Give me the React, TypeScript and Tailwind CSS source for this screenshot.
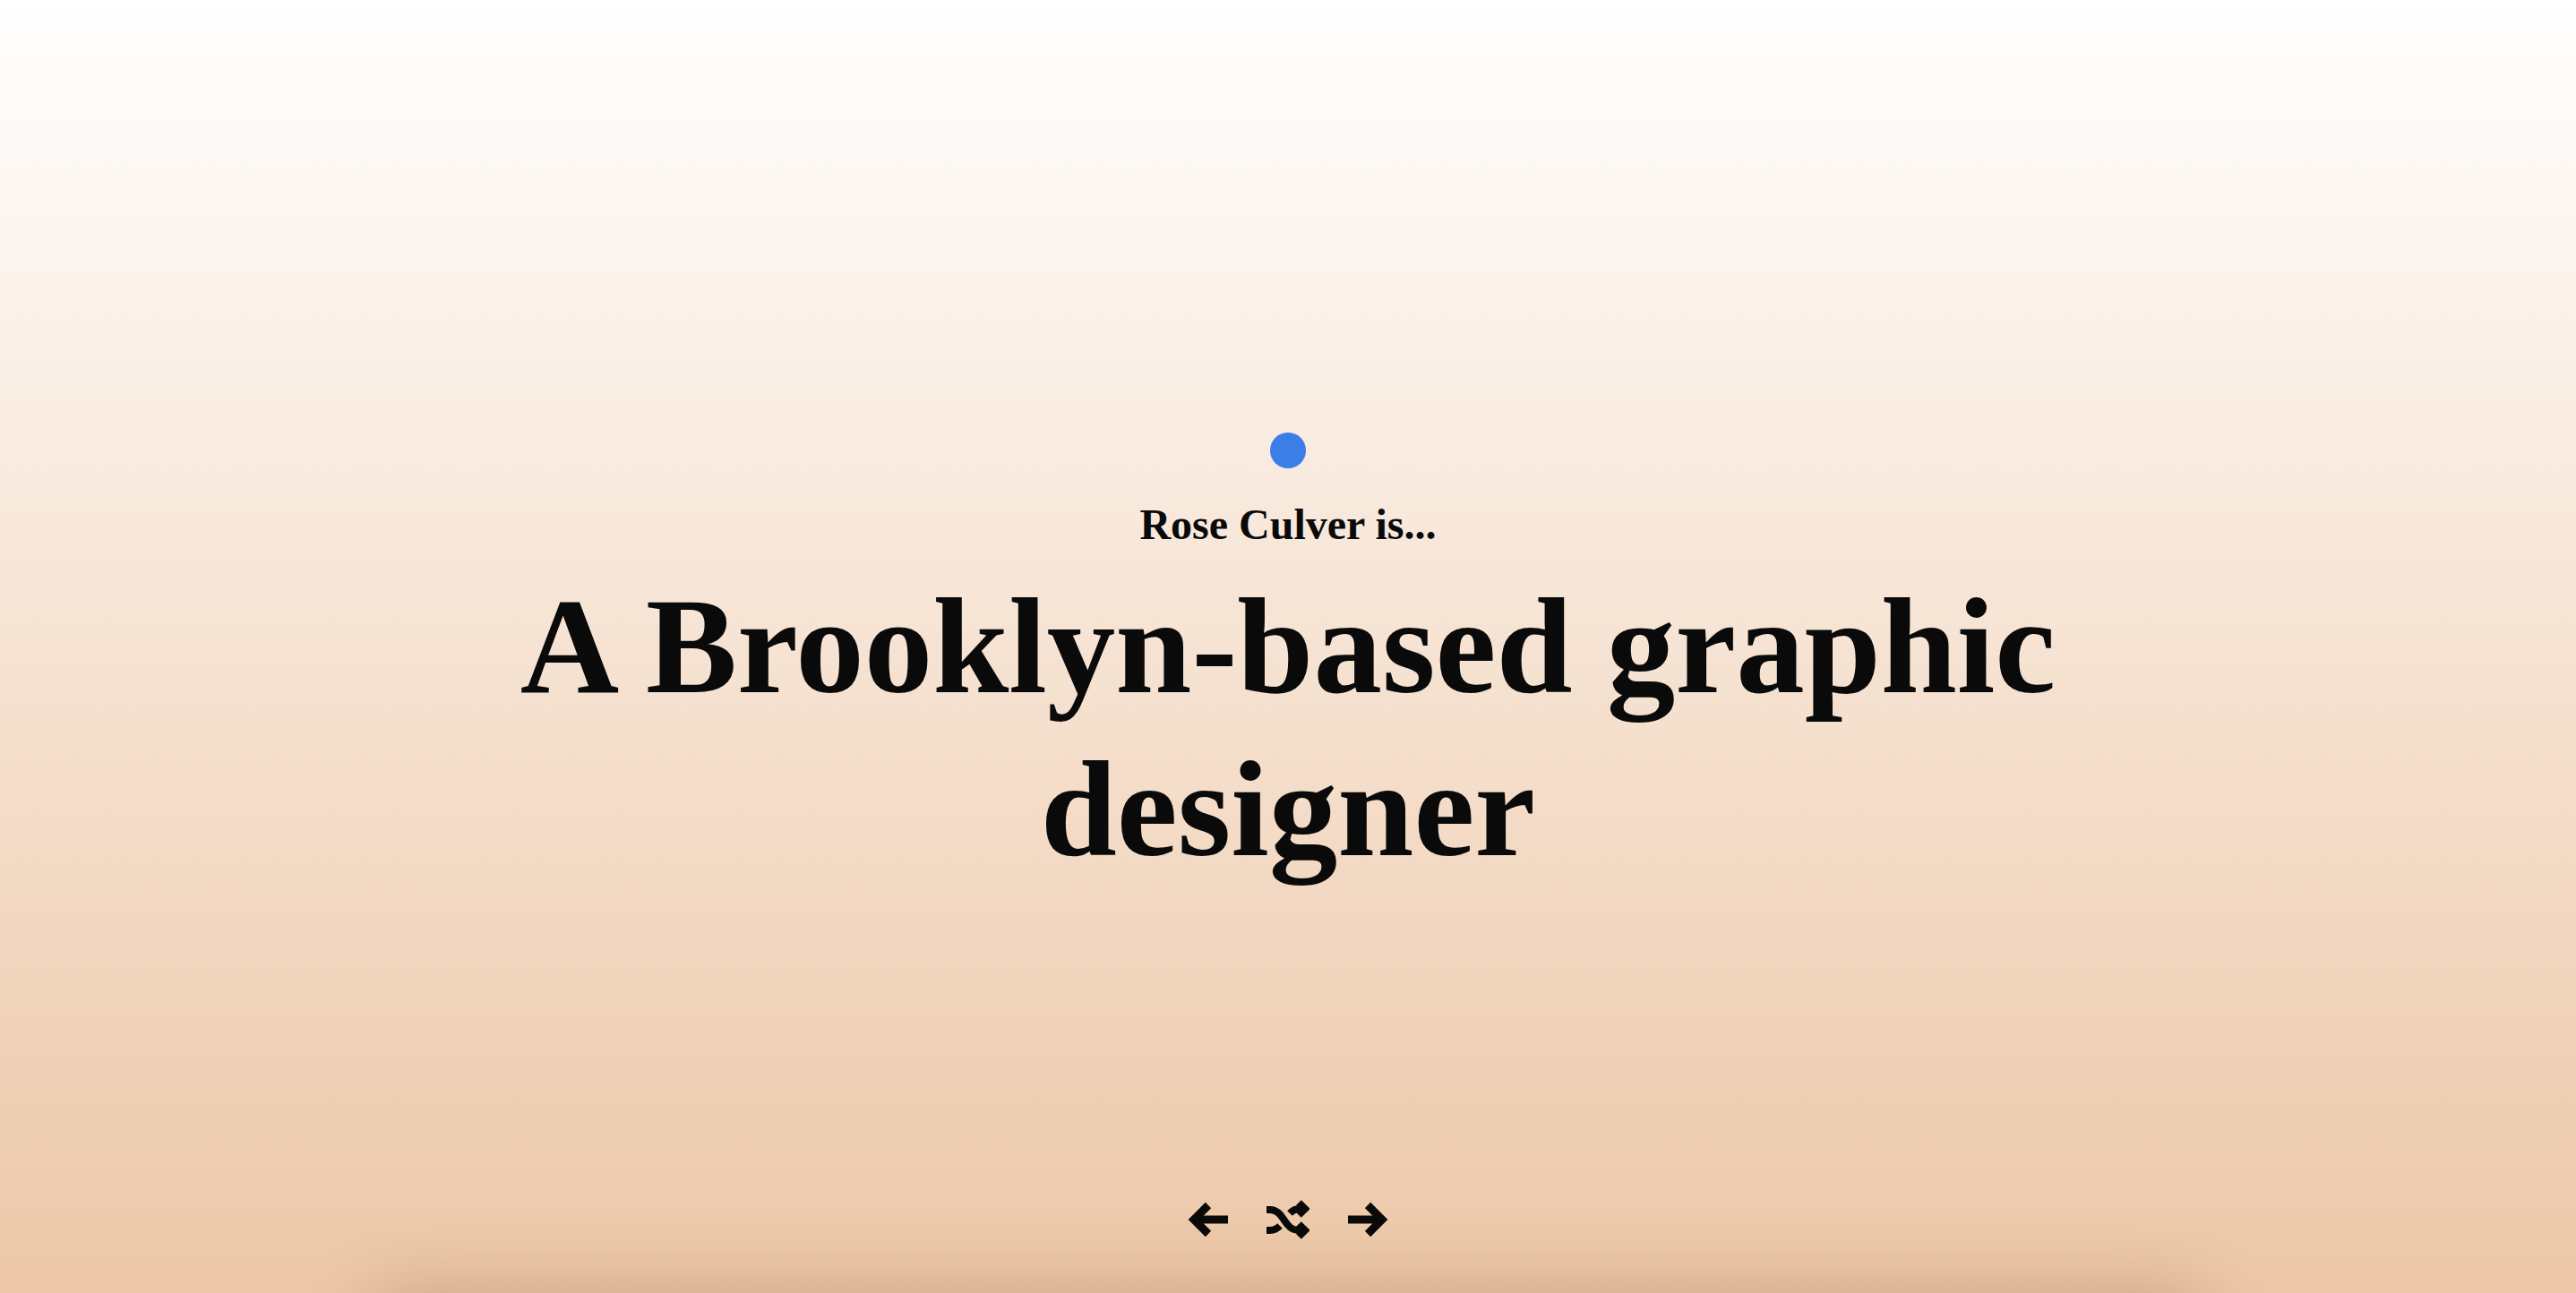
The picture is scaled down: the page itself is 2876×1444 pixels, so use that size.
import React from "react";

function ArrowLeftIcon() {
  return (
    <svg width="48" height="48" viewBox="0 0 48 48" fill="none" stroke="#0a0a0a" strokeWidth="9" strokeLinecap="butt" strokeLinejoin="miter">
      <path d="M46 24H9" />
      <path d="M24 8L8 24l16 16" />
    </svg>
  );
}

function ArrowRightIcon() {
  return (
    <svg width="48" height="48" viewBox="0 0 48 48" fill="none" stroke="#0a0a0a" strokeWidth="9" strokeLinecap="butt" strokeLinejoin="miter">
      <path d="M2 24H39" />
      <path d="M24 8l16 16-16 16" />
    </svg>
  );
}

function ShuffleIcon() {
  return (
    <svg width="48" height="48" viewBox="0 0 48 48" fill="none" stroke="#0a0a0a" strokeWidth="8" strokeLinecap="butt" strokeLinejoin="miter">
      <path d="M0 13H4C12 13 16 19 20 25C24 31 28 36 36 36H40" />
      <path d="M36 29L43 36L36 43" />
      <path d="M0 36H4C9 36 12 34 15 31" />
      <path d="M26 17C29 14 32 12 36 12H40" />
      <path d="M36 5L43 12L36 19" />
    </svg>
  );
}

export default function App() {
  return (
    <div className="relative h-[1444px] w-full overflow-hidden bg-linear-to-b from-white to-[#ecc7a7] font-['Liberation_Serif','DejaVu_Serif',serif] text-[#0a0a0a]">
      <div className="flex flex-col items-center pt-[483px]">
        <div className="h-10 w-10 rounded-full bg-[#3d7de8]" />
        <p className="mt-[39px] text-[48px] font-bold leading-[48px]">Rose Culver is...</p>
        <h1 className="mt-[21px] max-w-[1950px] text-center text-[153px] font-bold leading-[182px]">
          A Brooklyn-based graphic designer
        </h1>
        <div className="mt-[343px] flex items-center gap-[41px]">
          <button className="flex h-12 w-12 items-center justify-center" aria-label="Previous">
            <ArrowLeftIcon />
          </button>
          <button className="flex h-12 w-12 items-center justify-center" aria-label="Shuffle">
            <ShuffleIcon />
          </button>
          <button className="flex h-12 w-12 items-center justify-center" aria-label="Next">
            <ArrowRightIcon />
          </button>
        </div>
      </div>
      <div className="absolute left-1/2 top-[1446px] h-[400px] w-[2040px] -translate-x-1/2 rounded-t-[24px] bg-[#ecc8a9] shadow-[0_0_80px_rgba(110,60,25,0.28)]" />
    </div>
  );
}
